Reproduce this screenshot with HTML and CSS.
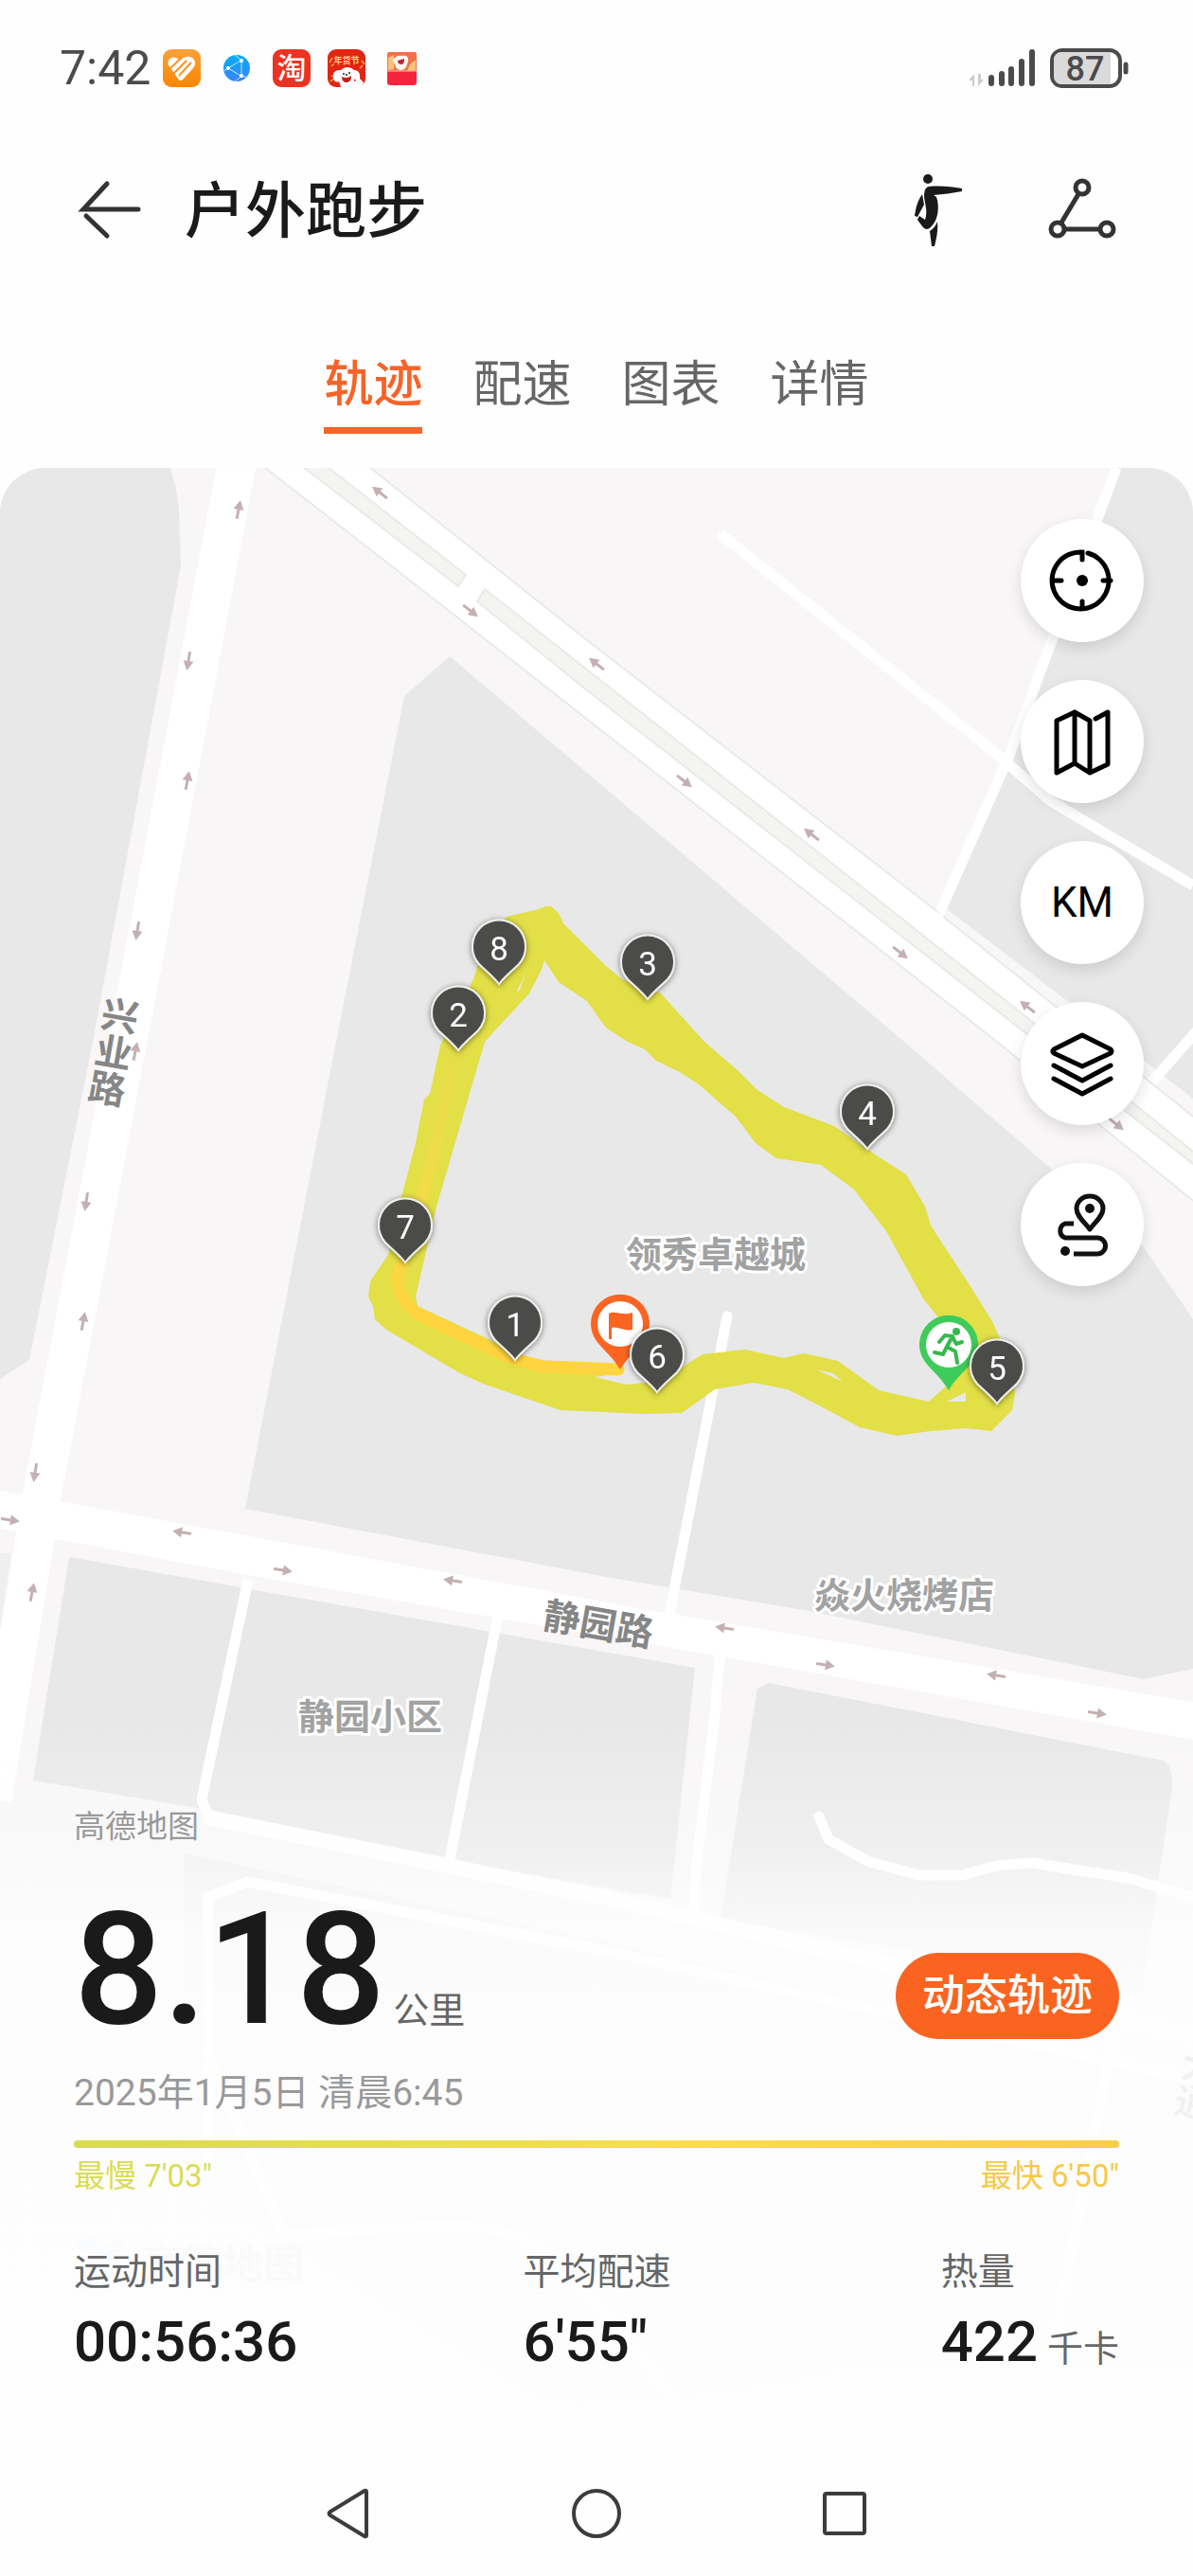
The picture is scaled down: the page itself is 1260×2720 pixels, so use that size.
FILE: index.html
```html
<!DOCTYPE html>
<html lang="zh-CN">
<head>
<meta charset="utf-8">
<meta name="viewport" content="width=device-width, initial-scale=1">
<title>户外跑步</title>
<link rel="stylesheet" href="styles.css">
</head>
<body>
<div class="status">
  <div class="status-side">
    <span class="clock">7:42</span>
    <div class="apps">
      <svg width="40" height="40" viewBox="0 0 40 40" aria-hidden="true">
        <defs><linearGradient id="amber" x1="0" y1="0" x2="0" y2="1"><stop offset="0" stop-color="#f9a23c"/><stop offset="1" stop-color="#fb8500"/></linearGradient></defs>
        <rect width="40" height="40" rx="9" fill="url(#amber)"/>
        <path d="M6 17C4 11 9 7 14 9c2 1 3 2 4 3 3-3 8-6 13-3 4 3 4 7 1 11L21 32c-2 2-4 1-5-1z" fill="#fff"/>
        <path d="M6 22L18 10.500M11 26L25 12M17 28L30 14" stroke="#fa9424" stroke-width="2"/>
      </svg>
      <svg width="40" height="40" viewBox="0 0 40 40" aria-hidden="true">
        <defs><linearGradient id="sky" x1="0" y1="0" x2="0" y2="1"><stop offset="0" stop-color="#06aef4"/><stop offset="1" stop-color="#3a84fc"/></linearGradient></defs>
        <circle cx="20" cy="20" r="14" fill="url(#sky)"/>
        <g fill="none" stroke="#bfe4ff" stroke-width="1"><path d="M11 20L25 11.500M11 20l14 8.500M25 11.500v17M25 11.500L18 6M11 20l-5 3M25 28.500L18 34M25 28.500l7 1"/></g>
        <g fill="#fff"><circle cx="11" cy="20" r="2"/><circle cx="25" cy="12" r="2"/><circle cx="25" cy="28" r="2"/></g>
      </svg>
      <svg width="40" height="40" viewBox="0 0 40 40" aria-hidden="true">
        <rect width="40" height="40" rx="9" fill="#ea3323"/>
        <text class="app-glyph" x="20" y="31" text-anchor="middle">淘</text>
      </svg>
      <svg width="40" height="40" viewBox="0 0 40 40" aria-hidden="true">
        <rect width="40" height="40" rx="9" fill="#e32413"/>
        <path d="M2 14l3-5M4 18l3-3M36 12l3 4M34 20l3-3M3 34l5-4M4 28l3 1" stroke="#f5a742" stroke-width="1.500" fill="none"/>
        <text class="app-caption" x="20" y="15" text-anchor="middle">年货节</text>
        <path d="M6 27c1-5 5-5 8-5 4-4 10-4 14 0 4 0 7 3 6 9-2 3-5 2-6 0v3l6-3 4 4-2 5H14l-2-6c-3 2-7-1-6-7z" fill="#fff"/>
        <path d="M15 29c4 2 7 1 10-1 0 5-2 7-5 7s-5-2-5-6z" fill="#c9201c"/>
        <circle cx="17" cy="26" r="1" fill="#222"/><circle cx="23" cy="25" r="1" fill="#222"/><circle cx="20" cy="27" r="1" fill="#222"/>
      </svg>
      <svg width="40" height="40" viewBox="0 0 40 40" aria-hidden="true">
        <rect x="5" y="3" width="31" height="35" rx="3" fill="#f4243c"/>
        <path d="M5 6a3 3 0 0 1 3-3h25a3 3 0 0 1 3 3v17H5z" fill="#f0714a"/>
        <path d="M6 9l6-3v15l-6 1zM29 16l6-5v11l-9 1z" fill="#f8c47c"/>
        <path d="M11 11c3-4 6-5 10-4 5-1 7 2 6 6l-2 6c-3 4-8 4-11 0z" fill="#fff6f2"/>
        <path d="M16 12l7-2c0 4-1 6-3 6s-4-1-4-4z" fill="#c0262a"/>
        <path d="M5 23h31" stroke="#f8c0a0" stroke-width="1"/>
      </svg>
    </div>
  </div>
  <svg width="172" height="42" viewBox="0 0 172 42" role="img" aria-label="信号与电量">
    <path d="M0 34l6-7v13H4v-6zM10 27v13l6-7h-3v-6z" fill="#ccc"/>
    <g stroke="#4b4b4b" stroke-width="6" stroke-linecap="round"><path d="M24 31v6M35 27v10M45 22v15M56 14v23M67 4v33"/></g>
    <rect x="88" y="2" width="72" height="38" rx="11" fill="#fff" stroke="#4b4b4b" stroke-width="4"/>
    <path d="M98 4h52v34H98a8 8 0 0 1-8-8V12a8 8 0 0 1 8-8z" fill="#dadada"/>
    <path d="M166 17v8" stroke="#4b4b4b" stroke-width="5" stroke-linecap="round"/>
    <text class="battery-level" x="123" y="34" text-anchor="middle">87</text>
  </svg>
</div>

<header class="header">
  <button class="icon-button" type="button" aria-label="返回">
    <svg width="80" height="80" viewBox="0 0 80 80" fill="none" stroke="#333" stroke-width="5" stroke-linecap="round"><path d="M69 40H11L36 13M14 47l22 21"/></svg>
  </button>
  <h1 class="title">户外跑步</h1>
  <div class="header-actions">
    <button class="icon-button" type="button" aria-label="动作">
      <svg width="80" height="80" viewBox="0 0 80 80" fill="#1a1a1a">
        <circle cx="30" cy="8" r="5"/>
        <path d="M31 16c12-1 24 0 35 2v3c-10 2-20 3-30 4l3 2c3 9 2 18-1 25-3 5-5 8-9 9-3 0-5-3-10-10l2-4 6 4c3-9 0-16-1-24 0-6 1-10 5-11z"/>
        <path d="M24 24l2 11-7 13-3-1c1-8 3-16 8-23z"/>
        <path d="M40 53c1 9-1 18-3 26h-3l-2-16c3-2 6-5 8-10z"/>
      </svg>
    </button>
    <button class="icon-button" type="button" aria-label="分享轨迹">
      <svg width="80" height="80" viewBox="0 0 80 80" fill="none" stroke="#333" stroke-width="5"><circle cx="41" cy="17" r="7"/><circle cx="15" cy="61" r="7"/><circle cx="67" cy="61" r="7"/><path d="M37 24L19 54M23 61h36"/></svg>
    </button>
  </div>
</header>

<nav class="tabs" aria-label="运动数据">
  <a class="tab tab-active" href="#track" aria-current="page">轨迹</a>
  <a class="tab" href="#pace">配速</a>
  <a class="tab" href="#charts">图表</a>
  <a class="tab" href="#details">详情</a>
</nav>

<main class="track" id="track">
  <svg class="map" viewBox="0 494 1260 2094" preserveAspectRatio="xMidYMin slice" role="img" aria-label="跑步轨迹地图">
    <defs>
      <linearGradient id="fade" gradientUnits="userSpaceOnUse" x1="0" y1="1820" x2="0" y2="2588">
        <stop offset="0" stop-color="#fefefe" stop-opacity="0"/>
        <stop offset=".06" stop-color="#fefefe" stop-opacity=".12"/>
        <stop offset=".18" stop-color="#fefefe" stop-opacity=".38"/>
        <stop offset=".28" stop-color="#fefefe" stop-opacity=".78"/>
        <stop offset=".38" stop-color="#fefefe" stop-opacity=".88"/>
        <stop offset=".9" stop-color="#fefefe" stop-opacity=".94"/>
        <stop offset="1" stop-color="#fefefe" stop-opacity="1"/>
      </linearGradient>
      <linearGradient id="fast" gradientUnits="userSpaceOnUse" x1="0" y1="1100" x2="0" y2="1380">
        <stop offset="0" stop-color="#e6dd48"/><stop offset=".5" stop-color="#efdd48"/><stop offset="1" stop-color="#ffd43e"/>
      </linearGradient>
      <filter id="shadow" x="-30%" y="-30%" width="160%" height="160%"><feDropShadow dx="0" dy="1" stdDeviation="3" flood-color="#000" flood-opacity=".5"/></filter>
      <path id="arrow" d="M-10-1.500H0V-5.500L10 0 0 5.500V1.500H-10z" fill="#c4b0b3"/>
      <path id="pin" d="M0 37C-6 29-14 23-21 16A28 28 0 1 1 21 16C14 23 6 29 0 37Z"/>
    </defs>

    <rect y="494" width="1260" height="2094" fill="#f8f6f7"/>

    <!-- city blocks -->
    <g fill="#e8e8e8">
      <path d="M0 494H180L186 516 189 539 191 597 98 1100 31 1436 0 1456Z"/>
      <path d="M475 693L427 735 355 1100 259 1593 640 1665 849 1700 1208 1773 1260 1762V1393L1208 1317 1110 1234 955 1100 620 816Z"/>
      <path d="M1179 494H1260V1160L1130 1059 995 956 1065 800Z"/>
      <path d="M73 1644L518 1723 734 1761 708 2005 490 1967 208 1909 35 1880Z"/>
      <path d="M800 1783L812 1777 1228 1859Q1238 1862 1238 1887L1205 2110 967 2060 761 2027Z"/>
      <path d="M194 1957L640 2050 1260 2190V2500H900L610 2560 194 2300Z" fill="#eeeeef"/>
      <path d="M0 1640L12 1640-6 1760H0Z" fill="#efefef"/>
    </g>

    <!-- minor streets -->
    <g fill="none" stroke="#fff" stroke-width="11" stroke-linejoin="round">
      <path d="M760 563L1055 798 1110 846 1260 935"/>
      <path d="M1179 494L1065 800 987 976"/>
      <path d="M1210 1150L1268 1084"/>
      <path d="M768 1390L704 1720" stroke-linecap="round"/>
      <path d="M262 1668L213 1900 222 1922"/>
      <path d="M526 1705L475 1963"/>
      <path d="M761 1740L755 1810 736 1967 732 2025"/>
      <path d="M865 1918L875 1942 918 1966 971 1980H1016L1053 1970 1089 1967 1191 1983 1275 2008" stroke-linecap="round"/>
      <path d="M215 1918L640 2004 742 2028 1260 2150" stroke-width="16"/>
      <path d="M220 2300V2003L261 1987 640 2060 1260 2196"/>
      <path d="M220 2170L300 2360 460 2350Q550 2345 600 2400L760 2588M1180 2130L1090 2588" />
    </g>

    <!-- main roads -->
    <path d="M250 490L44 1580 28 1680-8 1900" fill="none" stroke="#fff" stroke-width="41"/>
    <path d="M0 1574L63 1585 685 1700 1260 1797V1837L767 1750 261 1663 0 1614Z" fill="#fff"/>
    <g stroke="#e9ebe6" stroke-width="2">
      <path d="M386 490L620 676 979 954 1264 1182V1271L1053 1100 640 775 473 644 275 490Z" fill="#fff"/>
      <path d="M316 490H342L492 607 484 619ZM512 622L620 707 1093 1081 1264 1219V1232L1191 1175 620 729 504 635Z" fill="#f4f4f3"/>
    </g>
    <path d="M992 964L984 982" stroke="#fff" stroke-width="11"/>

    <!-- traffic direction -->
    <g>
      <use href="#arrow" transform="translate(252 538) rotate(-79)"/>
      <use href="#arrow" transform="translate(199 698) rotate(99)"/>
      <use href="#arrow" transform="translate(198 824) rotate(-79)"/>
      <use href="#arrow" transform="translate(145 983) rotate(99)"/>
      <use href="#arrow" transform="translate(143 1110) rotate(-79)"/>
      <use href="#arrow" transform="translate(91 1269) rotate(99)"/>
      <use href="#arrow" transform="translate(88 1395) rotate(-79)"/>
      <use href="#arrow" transform="translate(37 1555) rotate(99)"/>
      <use href="#arrow" transform="translate(34 1681) rotate(-79)"/>
      <use href="#arrow" transform="translate(401 520) rotate(218)"/>
      <use href="#arrow" transform="translate(497 645) rotate(38)"/>
      <use href="#arrow" transform="translate(630 701) rotate(218)"/>
      <use href="#arrow" transform="translate(723 825) rotate(38)"/>
      <use href="#arrow" transform="translate(857 881) rotate(218)"/>
      <use href="#arrow" transform="translate(951 1006) rotate(38)"/>
      <use href="#arrow" transform="translate(1085 1063) rotate(218)"/>
      <use href="#arrow" transform="translate(1179 1187) rotate(38)"/>
      <use href="#arrow" transform="translate(11 1605) rotate(9)"/>
      <use href="#arrow" transform="translate(192 1618) rotate(189)"/>
      <use href="#arrow" transform="translate(299 1658) rotate(9)"/>
      <use href="#arrow" transform="translate(478 1669) rotate(189)"/>
      <use href="#arrow" transform="translate(765 1719) rotate(189)"/>
      <use href="#arrow" transform="translate(872 1758) rotate(9)"/>
      <use href="#arrow" transform="translate(1052 1769) rotate(189)"/>
      <use href="#arrow" transform="translate(1159 1809) rotate(9)"/>
    </g>

    <!-- place and road names -->
    <text class="road-name road-name-vertical" transform="translate(116 1110) rotate(10)" text-anchor="middle">兴业路</text>
    <text class="road-name" transform="translate(632 1715) rotate(10)" text-anchor="middle" dy="14">静园路</text>
    <text class="place-name" x="756" y="1338" text-anchor="middle">领秀卓越城</text>
    <text class="place-name" x="955" y="1698" text-anchor="middle">焱火烧烤店</text>
    <text class="place-name" x="391" y="1826" text-anchor="middle">静园小区</text>
    <text class="road-name road-name-vertical" transform="translate(1260 2200) rotate(10)" text-anchor="middle">大通</text>
    <path d="M80 2366l34-8-28 24zM100 2378l30-16-6 44-44 16z" fill="#c4dff5"/>
    <text class="map-brand" x="149" y="2406">高德地图</text>

    <!-- recorded track -->
    <path fill="#e2df47" fill-rule="evenodd" d="M569 960L576 957 582 957 590 964 595 975 640 1020 657 1034 698 1049 744 1100 779 1130 800 1151 828 1169 881 1189 924 1219 957 1240 977 1274 983 1294 1028 1363 1049 1397 1069 1444 1072 1472 1069 1489 1047 1511 1020 1508 983 1511 947 1516 908 1507 865 1484 832 1467 796 1460 755 1467 720 1492 681 1493 592 1489 510 1461 486 1450 408 1404 396 1393 394 1379 389 1369 391 1353 410 1325 424 1264 439 1207 448 1161 454 1155 465 1104 500 1034 506 1014 535 968Z
      M575 1014L590 1037 620 1057 640 1085 663 1100 681 1108 693 1120 718 1132 738 1145 777 1179 798 1207 820 1223 867 1230 902 1256 936 1300 975 1371 990 1390 1015 1430 1010 1454 981 1480 928 1468 885 1437 849 1429 828 1434 787 1425 742 1430 726 1440 702 1458 661 1462 628 1454 655 1450 655 1440 563 1436 441 1379 439 1369 461 1274 512 1100 522 1089 559 1049 571 1026Z
      M862 1446L880 1450 890 1459ZM1000 1480L1020 1470V1480ZM546 1046L555 1029 548 1047Z"/>
    <path d="M485 1104L472 1150 458 1220 435 1300 421 1345Q417 1366 440 1387L510 1420 545 1436 575 1443 653 1446" fill="none" stroke="url(#fast)" stroke-width="13" stroke-linejoin="round" stroke-linecap="round"/>

    <!-- start, finish and kilometre pins -->
    <g transform="translate(655 1398)">
      <path d="M0 48C-7 36-17 28-25 18A31 31 0 1 1 25 18C17 28 7 36 0 48Z" fill="#fb6421"/>
      <circle r="24" fill="#fff"/>
      <path d="M-12-11C-6-15 2-8 13-12V6C4 8-3 2-9 4V16H-12Z" fill="#fb6421"/>
    </g>
    <g transform="translate(1002 1420)">
      <path d="M0 48C-7 36-17 28-25 18A31 31 0 1 1 25 18C17 28 7 36 0 48Z" fill="#3fcb59"/>
      <circle r="24" fill="#fff"/>
      <g fill="none" stroke="#36b84f" stroke-width="4" stroke-linecap="round" stroke-linejoin="round"><path d="M-10-3L-4-10 4-9-2 2 7 7 9 19M-2 2L-6 10-15 8M4-8L8-1 14-3"/></g>
      <circle cx="8" cy="-14" r="4" fill="#36b84f"/>
    </g>
    <g class="pin"><g transform="translate(527 1002)"><use href="#pin"/><text y="12">8</text></g></g>
    <g class="pin"><g transform="translate(484 1072)"><use href="#pin"/><text y="12">2</text></g></g>
    <g class="pin"><g transform="translate(684 1018)"><use href="#pin"/><text y="12">3</text></g></g>
    <g class="pin"><g transform="translate(916 1176)"><use href="#pin"/><text y="12">4</text></g></g>
    <g class="pin"><g transform="translate(1053 1445)"><use href="#pin"/><text y="12">5</text></g></g>
    <g class="pin"><g transform="translate(694 1433)"><use href="#pin"/><text y="12">6</text></g></g>
    <g class="pin"><g transform="translate(428 1296)"><use href="#pin"/><text y="12">7</text></g></g>
    <g class="pin"><g transform="translate(544 1399)"><use href="#pin"/><text y="12">1</text></g></g>

    <rect y="1820" width="1260" height="768" fill="url(#fade)"/>
  </svg>

  <div class="tools">
    <button class="tool" type="button" aria-label="定位">
      <svg width="80" height="80" viewBox="0 0 80 80" fill="none" stroke="#000" stroke-width="5" stroke-linecap="round"><path d="M46 11A30 30 0 1 1 40 10V18M10 40h8M62 40h8M40 62v8"/><circle cx="40" cy="40" r="6" fill="#000" stroke="none"/></svg>
    </button>
    <button class="tool" type="button" aria-label="地图类型">
      <svg width="80" height="80" viewBox="0 0 80 80" fill="none" stroke="#000" stroke-width="5" stroke-linecap="round" stroke-linejoin="round"><path d="M54 16L67 9V64L48 73 32 63 13 73V18L32 9 48 18V73M32 9V63"/></svg>
    </button>
    <button class="tool" type="button" aria-label="公里标记"><span class="tool-text">KM</span></button>
    <button class="tool" type="button" aria-label="图层">
      <svg width="80" height="80" viewBox="0 0 80 80" fill="none" stroke="#000" stroke-width="5" stroke-linecap="round" stroke-linejoin="round"><path d="M40 10L70 25Q72 27 70 29L40 43 10 29Q8 27 10 25ZM10 42L40 58 70 42M10 56L40 72 70 56"/></svg>
    </button>
    <button class="tool" type="button" aria-label="路线">
      <svg width="80" height="80" viewBox="2 0 80 80" fill="none" stroke="#111" stroke-width="5" stroke-linecap="round"><path d="M33 39H24a8 8 0 0 0 0 15H58a8 8 0 0 1 0 17H33" stroke-linecap="butt"/><path d="M50 45C44 37 36 31 36 23A14 13 0 0 1 64 23C64 31 56 37 50 45Z" stroke-linejoin="round"/><circle cx="50" cy="23" r="5" fill="#111" stroke="none"/><circle cx="24" cy="68" r="5" fill="#111" stroke="none"/></svg>
    </button>
  </div>

  <section class="summary">
    <p class="credit">高德地图</p>
    <div class="distance-row">
      <p class="distance"><span class="distance-value">8.18</span><span class="unit">公里</span></p>
      <button class="replay" type="button">动态轨迹</button>
    </div>
    <p class="date">2025年1月5日 清晨6:45</p>
    <div class="pace-bar"></div>
    <div class="pace-range"><span class="slowest">最慢 7'03"</span><span class="fastest">最快 6'50"</span></div>
    <dl class="stats">
      <div><dt>运动时间</dt><dd>00:56:36</dd></div>
      <div><dt>平均配速</dt><dd>6'55"</dd></div>
      <div><dt>热量</dt><dd>422<span class="unit">千卡</span></dd></div>
    </dl>
  </section>
</main>

<nav class="system-nav" aria-label="系统导航">
  <button class="icon-button" type="button" aria-label="返回上一页"><svg width="64" height="64" viewBox="0 0 64 64" fill="none" stroke="#3c3c3c" stroke-width="4" stroke-linejoin="round"><path d="M51 9V55Q51 57 49 56L13 34Q10 32 13 30L49 8Q51 7 51 9Z"/></svg></button>
  <button class="icon-button" type="button" aria-label="主屏幕"><svg width="64" height="64" viewBox="0 0 64 64" fill="none" stroke="#3c3c3c" stroke-width="4"><circle cx="32" cy="32" r="24"/></svg></button>
  <button class="icon-button" type="button" aria-label="最近任务"><svg width="64" height="64" viewBox="0 0 64 64" fill="none" stroke="#3c3c3c" stroke-width="4"><rect x="11" y="11" width="42" height="42" rx="2"/></svg></button>
</nav>
</body>
</html>
```
FILE: styles.css
```css
* {
  box-sizing: border-box;
}

body {
  display: flex;
  flex-direction: column;
  min-height: 100vh;
  margin: 0;
  background: #fefefe;
  color: #1a1a1a;
  font-family: Roboto, "Noto Sans CJK SC", sans-serif;
}

p, h1, dl, dd {
  margin: 0;
}

button {
  padding: 0;
  border: 0;
  background: none;
  color: inherit;
  font: inherit;
}

svg {
  display: block;
}

.icon-button {
  display: flex;
}

.status {
  display: flex;
  align-items: center;
  justify-content: space-between;
  padding: 47px 65px 0 63px;
}

.status svg {
  overflow: visible;
}

.status-side,
.apps {
  display: flex;
  align-items: center;
}

.status-side {
  gap: 13px;
}

.apps {
  gap: 18px;
}

.clock {
  color: #4b4b4b;
  font-size: 50px;
  line-height: 50px;
}

.app-glyph {
  fill: #fff;
  font-size: 31px;
  font-weight: 500;
}

.app-caption {
  fill: #ffd98a;
  font-size: 9px;
  font-weight: 700;
}

.battery-level {
  fill: #4b4b4b;
  font-size: 36px;
  font-weight: 500;
}

.header {
  display: flex;
  align-items: center;
  padding: 76px 78px 0 77px;
  height: 172px;
}

.title {
  margin-left: 38px;
  padding-top: 6px;
  font-size: 64px;
  font-weight: 500;
  line-height: 90px;
}

.header-actions {
  display: flex;
  gap: 72px;
  margin-left: auto;
}

.tabs {
  display: flex;
  justify-content: center;
  gap: 53px;
  margin: 104px 0 36px;
}

.tab {
  padding-bottom: 10px;
  border-bottom: 7px solid transparent;
  color: #666;
  font-size: 52px;
  line-height: 68px;
  text-decoration: none;
}

.tab-active {
  border-image: linear-gradient(#f6652a, #f6652a) 1;
  color: #f66429;
  font-weight: 500;
}

.track {
  position: relative;
  display: flex;
  flex: 1;
  flex-direction: column;
  justify-content: space-between;
  gap: 80px;
  overflow: hidden;
  border-radius: 48px 48px 0 0;
}

.map {
  position: absolute;
  inset: 0;
  width: 100%;
  height: 100%;
}

.road-name {
  fill: #868686;
  font-size: 39px;
  font-weight: 700;
}

.road-name-vertical {
  writing-mode: vertical-rl;
}

.place-name {
  fill: #a2a2a2;
  stroke: #fff;
  stroke-width: 6px;
  stroke-linejoin: round;
  paint-order: stroke;
  font-size: 38px;
  font-weight: 700;
}

.map-brand {
  fill: #ccc;
  font-size: 43px;
  font-weight: 700;
}

.pin {
  filter: url(#shadow);
}

.pin use {
  fill: #4b4b4a;
  stroke: #efefec;
  stroke-width: 2px;
}

.pin text {
  fill: #fff;
  font-size: 35px;
  text-anchor: middle;
}

.tools {
  position: relative;
  display: flex;
  flex-direction: column;
  align-items: flex-end;
  gap: 40px;
  padding: 54px 52px 0;
}

.tool {
  display: flex;
  align-items: center;
  justify-content: center;
  width: 130px;
  height: 130px;
  border-radius: 50%;
  background: #fff;
  box-shadow: 0 6px 16px rgba(0, 0, 0, 0.12);
}

.tool-text {
  color: #000;
  font-size: 44px;
}

.summary {
  position: relative;
  padding: 0 78px 79px;
}

.credit,
.pace-range {
  font-size: 33px;
  line-height: 40px;
}

.credit {
  color: #999;
}

.distance-row {
  display: flex;
  align-items: flex-end;
  justify-content: space-between;
  margin: 69px 0 33px;
}

.distance {
  display: flex;
  align-items: baseline;
  gap: 8px;
  padding-bottom: 6px;
}

.distance-value {
  font-size: 166px;
  font-weight: 500;
  line-height: 124px;
}

.unit {
  color: #666;
  font-size: 38px;
  font-weight: 400;
  line-height: 48px;
}

.replay {
  padding: 12px 28px;
  border-radius: 46px;
  background: #fa6420;
  color: #fff;
  font-size: 45px;
  font-weight: 500;
  line-height: 67px;
}

.date {
  color: #999;
  font-size: 39px;
  line-height: 48px;
}

.pace-bar {
  height: 8px;
  margin: 26px 0 10px;
  border-radius: 4px;
  background: linear-gradient(90deg, #d8da50, #ecdf4e 40%, #fbdc4c 60%, #f9cc48);
}

.pace-range {
  display: flex;
  justify-content: space-between;
}

.slowest {
  color: #d9dc55;
}

.fastest {
  color: #f5ca49;
}

.stats {
  display: grid;
  grid-template-columns: 43fr 40fr auto;
  margin-top: 57px;
}

.stats dt {
  color: #666;
  font-size: 39px;
  line-height: 48px;
}

.stats dd {
  display: flex;
  align-items: baseline;
  gap: 10px;
  margin-top: 14px;
  font-size: 60px;
  font-weight: 500;
  line-height: 72px;
}

.system-nav {
  display: flex;
  align-items: center;
  justify-content: center;
  gap: 198px;
  padding: 34px 0;
}
```
